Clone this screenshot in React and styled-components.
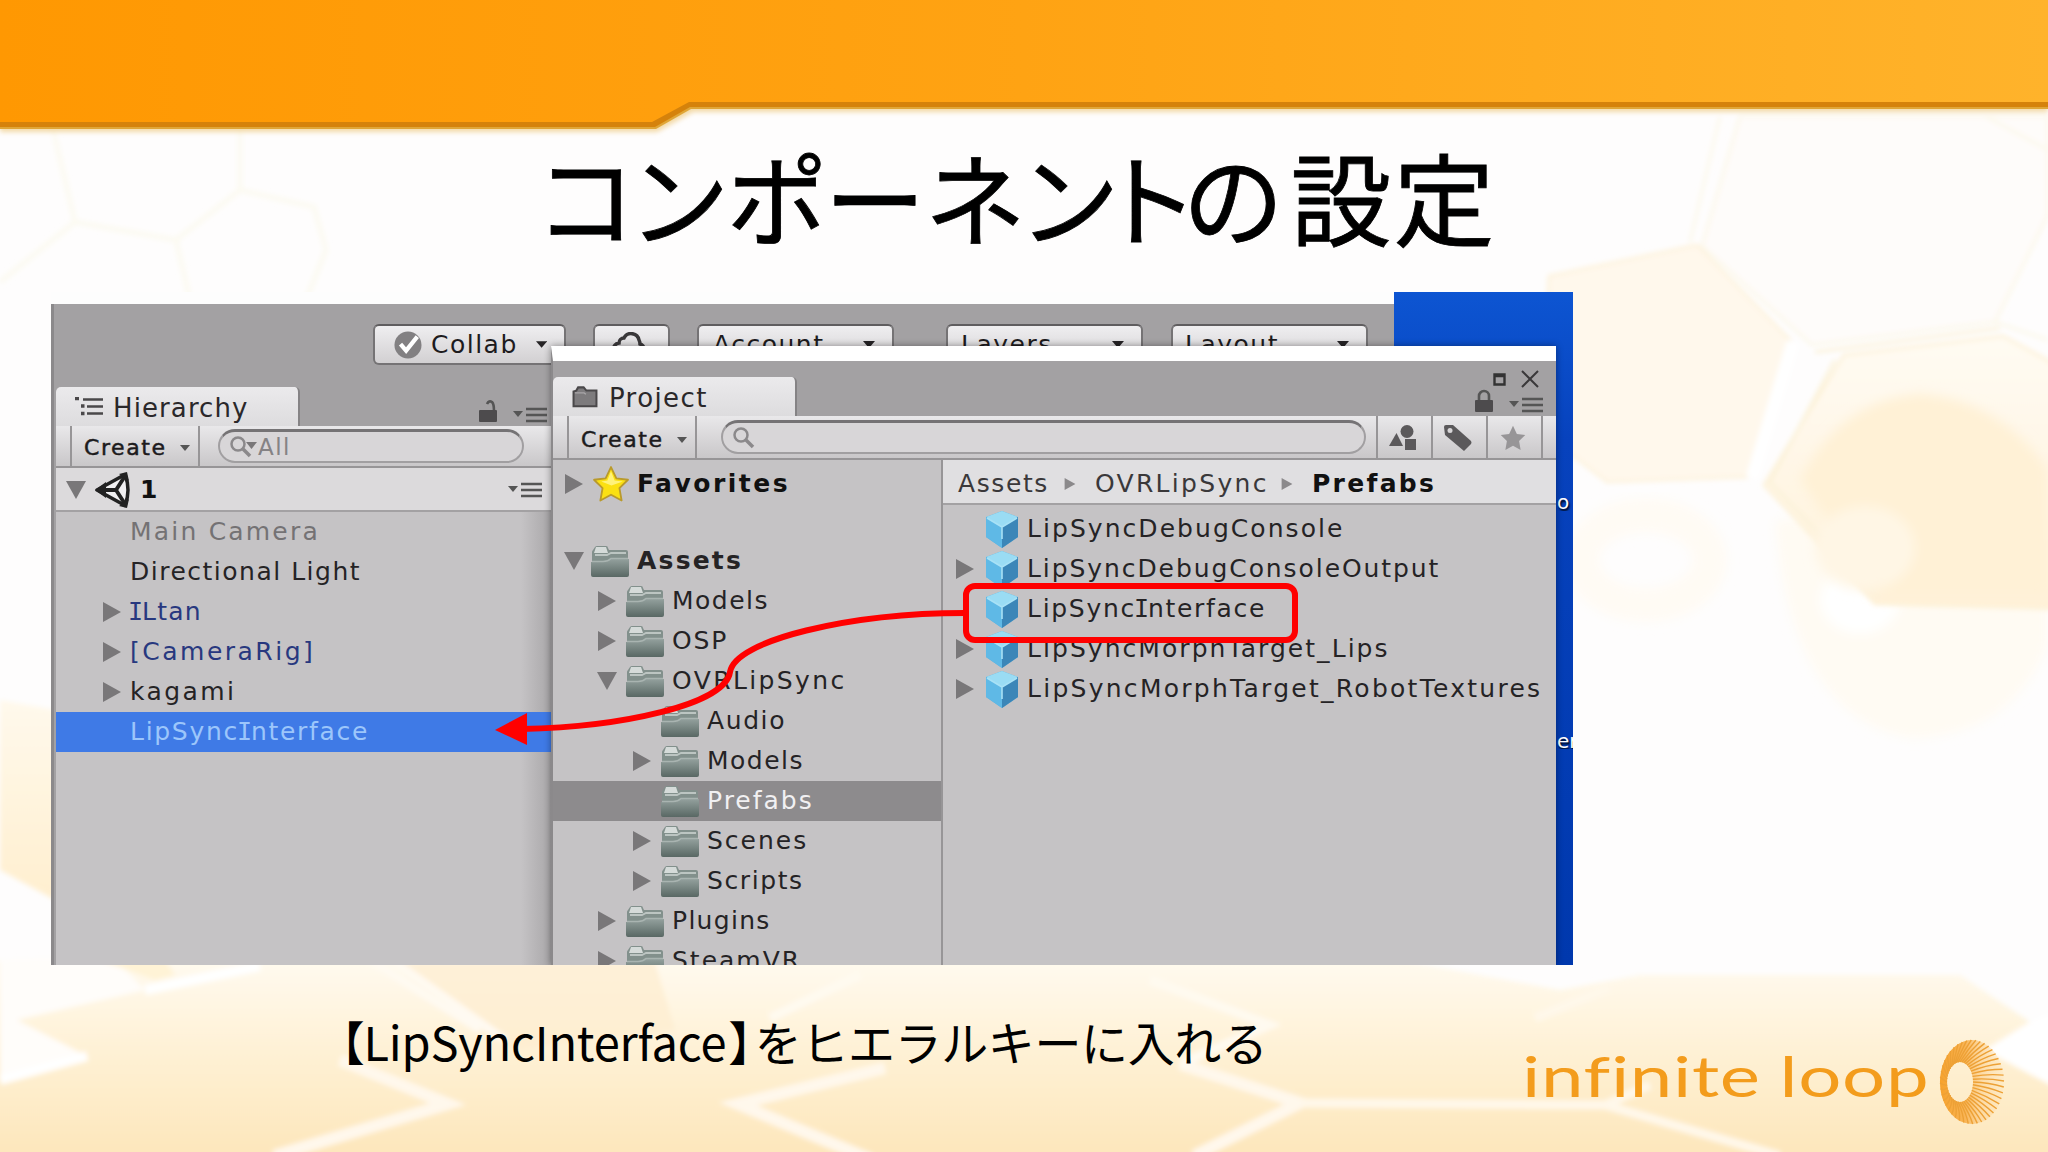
import React from "react";
import styled, { createGlobalStyle } from "styled-components";

const Global = createGlobalStyle`
  * { box-sizing: border-box; }
  body { margin: 0; background: #fff; overflow: hidden; }
`;

const ui = `"DejaVu Sans", Verdana, sans-serif`;
const jp = `"Noto Sans CJK JP", sans-serif`;

/* ---------- slide ---------- */
const Slide = styled.main`
  position: relative;
  width: 2048px;
  height: 1152px;
  overflow: hidden;
  display: flex;
  flex-direction: column;
  background: #fefdfd;
`;
const Backdrop = styled.svg`
  position: absolute;
  inset: 0;
`;
const Title = styled.h1`
  position: relative;
  margin: 124px 0 0;
  height: 168px;
  padding-left: 547px;
  display: flex;
  font: 400 101px/142px ${jp};
  font-feature-settings: "palt";
  -webkit-text-stroke: 0.8px #000;
  color: #000;
  white-space: nowrap;
`;
const Glyph = styled.span`
  width: ${(p) => p.$w}px;
  display: flex;
  justify-content: center;
`;
const Frame = styled.section`
  position: relative;
  flex: none;
  margin-left: 51px;
  width: 1522px;
  height: 673px;
  overflow: hidden;
  display: flex;
  background: #fdfdfd;
`;
const Footer = styled.footer`
  position: relative;
  flex: 1;
  display: flex;
  padding-left: 340px;
`;
const Caption = styled.p`
  margin: 42px 0 0;
  width: 1182px;
  display: flex;
  font: 400 47px/68px ${jp};
  color: #000;
  white-space: nowrap;
`;
const CaptionPart = styled.span`
  letter-spacing: ${(p) => p.$track || 0}px;
  margin-left: ${(p) => p.$shift || 0}px;
  font-feature-settings: ${(p) => (p.$tight ? `"palt"` : "normal")};
`;
const Brand = styled.div`
  display: flex;
  align-items: flex-start;
  width: 500px;
`;
const BrandName = styled.div`
  flex: none;
  width: 416px;
  margin-top: 77px;
  font: 400 56px/68px Lato, sans-serif;
  color: #f39c1c;
  white-space: nowrap;
  transform: scaleX(1.36);
  transform-origin: 0 0;
  letter-spacing: 0.5px;
  word-spacing: -1px;
`;
const Ring = styled.svg`
  flex: none;
  margin-top: 73px;
`;

/* ---------- editor main window ---------- */
const Editor = styled.div`
  width: 1343px;
  height: 661px;
  margin-top: 12px;
  background: #a3a1a3;
  border-left: 3px solid #8b898b;
  display: flex;
  flex-direction: column;
`;
const TopBar = styled.div`
  height: 83px;
  padding: 20px 0 0 319px;
  display: flex;
  align-items: flex-start;
`;
const TopButton = styled.div`
  width: ${(p) => p.$w}px;
  margin-right: ${(p) => p.$gap}px;
  height: 41px;
  padding: 0 17px 0 ${(p) => p.$pad || 14}px;
  border: 2px solid #757375;
  border-top-color: #5f5d5f;
  border-radius: 6px;
  background: linear-gradient(#efeef0, #d2d0d2);
  display: flex;
  align-items: center;
  gap: 9px;
  font: 25px/36px ${ui};
  letter-spacing: 1.5px;
  color: #1d1b1d;
`;
const Push = styled.span`
  flex: 1;
`;
const Panel = styled.div`
  width: 497px;
  margin-left: 2px;
  flex: 1;
  display: flex;
  flex-direction: column;
  background: linear-gradient(90deg, #c5c3c5 0, #c5c3c5 465px, #a7a5a7 497px);
`;
const TabStrip = styled.div`
  height: ${(p) => p.$h}px;
  display: flex;
  align-items: flex-end;
  background: #a3a1a3;
`;
const Tab = styled.div`
  height: 39px;
  width: 244px;
  padding: 4px 0 0 ${(p) => p.$pad}px;
  display: flex;
  align-items: center;
  gap: ${(p) => p.$gap}px;
  background: linear-gradient(#ebeaec, #dddcde);
  border-right: 2px solid #858385;
  border-radius: 5px 5px 0 0;
  font: 26px/35px ${ui};
  letter-spacing: ${(p) => p.$track}px;
  color: #2a282a;

  svg { margin-bottom: 4px; }
`;
const StripTools = styled.div`
  flex: 1;
  display: flex;
  justify-content: flex-end;
  align-items: flex-end;
  gap: 16px;
  padding: 0 ${(p) => p.$right}px 3px 0;
`;
const Toolbar = styled.div`
  height: ${(p) => p.$h}px;
  flex: none;
  padding-left: 14px;
  display: flex;
  align-items: center;
  background: linear-gradient(#e9e8ea, #c9c7c9);
  border-bottom: 2px solid #979597;
`;
const CreateButton = styled.div`
  align-self: stretch;
  width: 130px;
  padding: ${(p) => p.$drop}px 8px 0 12px;
  display: flex;
  align-items: center;
  justify-content: space-between;
  border: solid #979597;
  border-width: 0 2px;
  font: 22px/36px ${ui};
  letter-spacing: 1.6px;
  color: #1d1b1d;
  -webkit-text-stroke: 0.5px #1d1b1d;
`;
const Search = styled.div`
  width: ${(p) => p.$w}px;
  height: 34px;
  margin-left: ${(p) => p.$left}px;
  padding-left: 10px;
  display: flex;
  align-items: center;
  gap: 1px;
  border: 2px solid #a19fa1;
  border-top: 3px solid #757375;
  border-radius: 17px;
  background: #d8d6d8;
  font: 23px/26px ${ui};
  letter-spacing: 1.5px;
  color: #858385;
`;
const SceneRow = styled.div`
  height: 44px;
  display: flex;
  align-items: center;
  padding: 2px 11px 0 10px;
  gap: 9px;
  background: #dcdadc;
  border-bottom: 2px solid #a3a1a3;
  font: 700 25px/40px ${ui};
  color: #111;
`;
const Row = styled.div`
  flex: none;
  height: 40px;
  padding-left: ${(p) => p.$pad}px;
  display: flex;
  align-items: center;
  background: ${(p) => p.$fill || "transparent"};
  color: ${(p) => p.$ink || "#252325"};
  font: ${(p) => (p.$bold ? 700 : 400)} 25px/40px ${ui};
  letter-spacing: ${(p) => p.$track || 1.4}px;
  white-space: nowrap;
`;
const ArrowSlot = styled.span`
  width: ${(p) => p.$w}px;
  display: flex;
  align-items: center;
`;
const IconSlot = styled.span`
  width: ${(p) => p.$w}px;
  display: flex;
  align-items: center;
`;
const SerifI = styled.span`
  font-family: "DejaVu Sans Mono", monospace;
  letter-spacing: 0;
  margin: 0 -1px 0 -2px;
`;
const HierarchyList = styled.div`
  display: flex;
  flex-direction: column;
`;

/* ---------- floating project window ---------- */
const ProjectWindow = styled.div`
  position: absolute;
  left: 500px;
  top: 54px;
  width: 1005px;
  height: 619px;
  display: flex;
  flex-direction: column;
  background: #c5c3c5;
  border-top: 15px solid #fff;
  border-left: 2px solid #8b898b;
  box-shadow: 0 0 7px rgba(0, 0, 0, 0.4);
  overflow: hidden;
`;
const WindowTools = styled.div`
  flex: 1;
  align-self: stretch;
  display: flex;
  flex-direction: column;
  align-items: flex-end;
  justify-content: flex-end;
  gap: 1px;
  padding: 0 13px 3px 0;
`;
const ToolLine = styled.div`
  display: flex;
  align-items: ${(p) => (p.$low ? "flex-end" : "center")};
  gap: ${(p) => p.$gap}px;
  padding-right: ${(p) => p.$right || 0}px;
`;
const Filters = styled.div`
  margin-left: 10px;
  align-self: stretch;
  display: flex;
  border-left: 2px solid #979597;
`;
const FilterButton = styled.div`
  width: 55px;
  padding: 2px 3px 0 0;
  border-right: 2px solid #979597;
  display: flex;
  align-items: center;
  justify-content: center;
`;
const Columns = styled.div`
  flex: 1;
  display: flex;
  min-height: 0;
`;
const Tree = styled.div`
  width: 390px;
  border-right: 2px solid #979597;
  display: flex;
  flex-direction: column;
  overflow: hidden;
`;
const TreeTop = styled.div`
  flex: none;
  height: 81px;
  padding-top: 4px;
`;
const Assets = styled.div`
  flex: 1;
  display: flex;
  flex-direction: column;
`;
const Breadcrumb = styled.div`
  height: 45px;
  padding: 5px 0 0 15px;
  margin-bottom: 4px;
  display: flex;
  align-items: center;
  background: #e0dfe1;
  border-bottom: 2px solid #a3a1a3;
  font: 25px/38px ${ui};
`;
const Crumb = styled.span`
  width: ${(p) => p.$w}px;
  letter-spacing: ${(p) => p.$track}px;
  font-weight: ${(p) => (p.$bold ? 700 : 400)};
  color: ${(p) => (p.$bold ? "#111" : "#3a383a")};
`;
const CrumbArrow = styled.span`
  width: ${(p) => p.$w}px;
  display: flex;
`;

/* ---------- desktop ---------- */
const Desktop = styled.div`
  flex: 1;
  background: linear-gradient(#0d55d2, #0742bd 22%, #0038ad);
  display: flex;
  flex-direction: column;
  align-items: flex-end;
  color: #fff;
  font: 20px/28px ${ui};
  padding-top: 196px;
`;
const DesktopLabel = styled.span`
  width: 16px;
  height: 28px;
  margin-bottom: 216px;
  overflow: hidden;
  text-shadow: 1px 2px 2px #000;
`;

/* ---------- annotations ---------- */
const RedBox = styled.div`
  position: absolute;
  left: 912px;
  top: 291px;
  width: 335px;
  height: 60px;
  border: 6px solid #f00;
  border-radius: 12px;
`;
const Arrow = styled.svg`
  position: absolute;
  left: 0;
  top: 0;
`;

/* ---------- icons ---------- */
const Tri = ({ down, s = 20, c = "#797779" }) => (
  <svg width={s} height={s} viewBox="0 0 20 20">
    <path d={down ? "M0 1H20L10 19Z" : "M1 0V20L19 10Z"} fill={c} />
  </svg>
);
const Caret = ({ w = 12, c = "#252325" }) => (
  <svg width={w} height={w * 0.6} viewBox="0 0 12 7">
    <path d="M0 0H12L6 7Z" fill={c} />
  </svg>
);
const MenuIcon = () => (
  <svg width="34" height="16" viewBox="0 0 34 16">
    <path d="M0 4H10L5 10Z" fill="#555" />
    <path d="M13 2H34M13 8H34M13 14H34" stroke="#555" strokeWidth="2.6" />
  </svg>
);
const Check = () => (
  <svg width="30" height="30" viewBox="0 0 30 30">
    <circle cx="15" cy="15" r="14.5" fill="#828082" />
    <path d="M7 14l6 7L25 6" fill="none" stroke="#fff" strokeWidth="4.5" />
  </svg>
);
const Cloud = () => (
  <svg width="36" height="26" viewBox="0 0 36 26">
    <path d="M8 23a6 6 0 0 1-1-12 5 5 0 0 1 5-5 8 8 0 0 1 15 2c1 2 1 3 1 4a6 6 0 0 1 1 11z" fill="none" stroke="#3a383a" strokeWidth="3.5" />
  </svg>
);
const TreeIcon = () => (
  <svg width="28" height="20" viewBox="0 0 28 20">
    <path d="M8 2.500H28M12 9.500H28M12 16.500H28" stroke="#4a484a" strokeWidth="2.4" />
    <path d="M0 1.500h4M6 9h3.500M6 16.500h3.500" stroke="#4a484a" strokeWidth="3.500" />
  </svg>
);
const LockIcon = ({ open }) => (
  <svg width="18" height="24" viewBox="0 0 18 24">
    <path d={open ? "M8 5q2-4 5-2q2 2 2 9" : "M4 12V7a5 5 0 0 1 10 0v5"} fill="none" stroke="#555" strokeWidth="2.600" />
    <rect x="0" y="11" width="18" height="12" rx="1" fill="#4d4b4d" />
  </svg>
);
const SearchIcon = ({ menu }) => (
  <svg width={menu ? 27 : 24} height="24" viewBox={menu ? "0 0 27 24" : "0 0 24 24"}>
    <circle cx="8" cy="9" r="6.500" fill="none" stroke="#8b898b" strokeWidth="2.500" />
    <path d="M13 14l7 7" stroke="#8b898b" strokeWidth="3.500" />
    {menu && <path d="M16 7h11l-5.500 7z" fill="#797779" />}
  </svg>
);
const UnityIcon = () => (
  <svg width="36" height="36" viewBox="0 0 36 36">
    <path d="M2 18L30 2.500Q36 18 30 33.500Z" fill="#f1f0f2" stroke="#222" strokeWidth="3.500" strokeLinejoin="round" />
    <path d="M0 18L11 10V26Z" fill="#222" />
    <path d="M4 18H21L30 4M21 18l9 14" fill="none" stroke="#222" strokeWidth="3.800" />
    <path d="M24 2l8-2 2 9zM24 34l8 2 2-9z" fill="#222" />
  </svg>
);
const Folder = () => (
  <svg width="38" height="33" viewBox="0 0 38 33">
    <defs>
      <linearGradient id="fld" x1="0" y1="0" x2="0" y2="1">
        <stop offset="0" stopColor="#93a09d" />
        <stop offset="1" stopColor="#596864" />
      </linearGradient>
    </defs>
    <path d="M1 30V7q0-1 1-2l2-3q1-1 2-1h9q2 0 2 2l1 2h17q2 0 2 2v23z" fill="#82908c" />
    <path d="M5 2h10l2 6H3z" fill="#d5dbd9" />
    <path d="M4 10l12 0 4-2h15" stroke="#bcc5c2" strokeWidth="1.800" fill="none" />
    <path d="M0 17h12q5 0 8-3h18v16q0 2-2 2H2q-2 0-2-2z" fill="url(#fld)" />
    <path d="M1 16.500h11q5 0 8-3h17" stroke="#a9b4b1" strokeWidth="1.600" fill="none" />
  </svg>
);
const TabFolder = () => (
  <svg width="28" height="22" viewBox="0 0 28 24">
    <path d="M1.500 22V6l3-1 2-3.500h6l3 3.500h11V22z" fill="#7d7b7d" stroke="#4a484a" strokeWidth="2.200" />
    <path d="M3 7.500h10l2 1.500" stroke="#a9a7a9" strokeWidth="1.500" fill="none" />
  </svg>
);
const Cube = () => (
  <svg width="34" height="37" viewBox="0 0 34 37">
    <path d="M17 0L33 6V26L17 37L1 26V6Z" fill="#58aedd" />
    <path d="M17 0L33 6L17 16L1 6Z" fill="#9adcf4" />
    <path d="M1 6L17 16V37L1 26Z" fill="#5fb9e6" />
    <path d="M33 6L17 16V37L33 26Z" fill="#3b86b8" />
    <path d="M2 7L17 16L32 7M17 16V28" fill="none" stroke="#a9e2f6" strokeWidth="1.600" />
  </svg>
);
const starPath = "M17 1L22.200 12L33.500 13.400L25.200 21.500L27.300 33.500L17 28L6.700 33.500L8.800 21.500L.500 13.400L11.800 12Z";
const Star = () => (
  <svg width="36" height="36" viewBox="0 0 34 35">
    <path d={starPath} fill="#fbe012" stroke="#b99a2c" strokeWidth="1.800" strokeLinejoin="round" />
    <path d="M17 5l3.500 9 8 1-11 4-10-4 6-1z" fill="#fff27a" />
  </svg>
);
const GreyStar = () => (
  <svg width="26" height="26" viewBox="0 0 34 35">
    <path d={starPath} fill="#979597" />
  </svg>
);
const Shapes = () => (
  <svg width="28" height="26" viewBox="0 0 28 26">
    <circle cx="18" cy="6.500" r="6.500" fill="#5b595b" />
    <path d="M0 21L7.500 8L14 21Z" fill="#5b595b" />
    <rect x="16" y="14" width="11" height="11" fill="#5b595b" />
  </svg>
);
const Tag = () => (
  <svg width="30" height="28" viewBox="0 0 30 28">
    <path d="M1 3Q1 1 3 1H10L28 17Q29 19 28 20L21 27L2 11Z" fill="#5b595b" />
    <circle cx="7" cy="6.500" r="2.500" fill="#d8d6d8" />
  </svg>
);

const label = (t) =>
  t.split(/(I)/).map((s, i) => (s === "I" ? <SerifI key={i}>I</SerifI> : s));

/* ---------- data ---------- */
const hierarchy = [
  { t: "Main Camera", ink: "#747274", k: 2.2 },
  { t: "Directional Light", k: 1.5 },
  { t: "ILtan", ink: "#28387f", arrow: true, k: 1.2 },
  { t: "[CameraRig]", ink: "#28387f", arrow: true, k: 2.5 },
  { t: "kagami", arrow: true, k: 2.4 },
  { t: "LipSyncInterface", ink: "#9cc6fb", fill: "#3f7ae6", k: 1.7 },
];
const tree = [
  { t: "Assets", lv: 0, a: "down", bold: true, k: 2.2 },
  { t: "Models", lv: 1, a: "right", k: 1.5 },
  { t: "OSP", lv: 1, a: "right", k: 1.8 },
  { t: "OVRLipSync", lv: 1, a: "down", k: 2.4 },
  { t: "Audio", lv: 2, k: 1.6 },
  { t: "Models", lv: 2, a: "right", k: 1.5 },
  { t: "Prefabs", lv: 2, fill: "#8d8b8d", ink: "#f1f0f2", k: 2 },
  { t: "Scenes", lv: 2, a: "right", k: 2 },
  { t: "Scripts", lv: 2, a: "right", k: 1.6 },
  { t: "Plugins", lv: 1, a: "right", k: 1.3 },
  { t: "SteamVR", lv: 1, a: "right", k: 2 },
];
const prefabs = [
  { t: "LipSyncDebugConsole", k: 2.05 },
  { t: "LipSyncDebugConsoleOutput", a: true, k: 1.92 },
  { t: "LipSyncInterface", k: 1.7 },
  { t: "LipSyncMorphTarget_Lips", a: true, k: 2.05 },
  { t: "LipSyncMorphTarget_RobotTextures", a: true, k: 2.27 },
];
const title = [
  ["コ", 82], ["ン", 100], ["ポ", 92], ["ー", 108], ["ネ", 92],
  ["ン", 96], ["ト", 70], ["の", 92], ["設", 124], ["定", 82],
];

function Background() {
  return (
    <Backdrop width="2048" height="1152" viewBox="0 0 2048 1152">
      <defs>
        <linearGradient id="ban" x1="0" x2="1" y1="0" y2="0">
          <stop offset="0" stopColor="#ff9802" />
          <stop offset=".5" stopColor="#ffa313" />
          <stop offset="1" stopColor="#ffb32b" />
        </linearGradient>
        <linearGradient id="floor" x1="0" x2="0" y1="0" y2="1">
          <stop offset="0" stopColor="#fffaef" />
          <stop offset=".5" stopColor="#fef0d2" />
          <stop offset="1" stopColor="#fde5b9" />
        </linearGradient>
        <linearGradient id="hexB" x1="0" x2="0" y1="0" y2="1">
          <stop offset="0" stopColor="#fffbf3" />
          <stop offset="1" stopColor="#fff1d8" />
        </linearGradient>
        <linearGradient id="side" x1="0" x2="0" y1="0" y2="1">
          <stop offset="0" stopColor="#fff9ec" />
          <stop offset="1" stopColor="#ffefcf" />
        </linearGradient>
        <filter id="soft"><feGaussianBlur stdDeviation="2.500" /></filter>
        <filter id="haze"><feGaussianBlur stdDeviation="6" /></filter>
      </defs>

      <g fill="none" stroke="#fcfaf1" strokeWidth="5" filter="url(#soft)">
        <path d="M52 125L75 222L176 240L240 190V125M75 222L0 282M176 240L190 300M240 190L314 207L326 250L306 300" />
      </g>

      <g filter="url(#soft)">
        <path d="M1740 116L1702 246L1812 345L1995 322L2048 215V116Z" fill="#fefcfa" stroke="#fcf8ea" strokeWidth="3" />
        <path d="M1720 116L1690 242M1995 322L2048 340M1985 116L2048 150" stroke="#fcf8ea" strokeWidth="3" />
        <path d="M1549 276L1697 245L1790 340L1747 477L1607 482L1540 430Z" fill="#fff8ec" stroke="#fdf3de" strokeWidth="3" />
        <path d="M1793 342L1752 478" stroke="#fff" strokeWidth="13" />
      </g>
      <g filter="url(#haze)">
        <ellipse cx="1646" cy="560" rx="64" ry="45" fill="none" stroke="#fffbf4" strokeWidth="34" />
        <path d="M1775 520Q1790 715 1908 738Q2010 738 2048 645V520Z" fill="#fffbf3" />
        <ellipse cx="1860" cy="600" rx="40" ry="34" fill="#fff" />
      </g>
      <g filter="url(#soft)">
        <path d="M1844 355L2003 336L2060 367V609L1875 604L1764 485Z" fill="url(#hexB)" stroke="#fdf2d9" strokeWidth="3" />
        <path d="M1815 352L2000 328M1835 360L1770 482L1880 597" stroke="#fbf2d9" strokeWidth="3" fill="none" />
      </g>
      <g filter="url(#haze)">
        <path d="M1800 480Q1840 400 1920 394Q2000 400 2048 470V596L1880 596Z" fill="#fff1d6" />
        <ellipse cx="1865" cy="548" rx="50" ry="42" fill="#fff6e5" />
      </g>

      <g filter="url(#soft)">
        <path d="M0 700L55 710V900L0 870Z" fill="url(#side)" />
        <path d="M-10 960H1400L1560 990L1640 975H1960L2030 1022L1985 1050L2060 1090V1165H-10Z" fill="url(#floor)" />
        <path d="M0 960L110 955L145 990L17 1020L87 1056L0 1080Z" fill="#fffdfa" />
        <path d="M100 960H165L175 975L155 980Z" fill="#fff3d6" />
        <path d="M400 962H655L675 1030L510 1050Z" fill="#fdedcf" opacity=".7" />
        <path d="M370 960L480 1030M395 962L505 1040" stroke="#fffaf2" strokeWidth="8" />
        <path d="M145 990L260 966M0 1080L87 1056" stroke="#fff" strokeWidth="10" fill="none" />
        <path d="M340 1060L448 1104L274 1156M885 1068L738 1104L872 1160M1180 1064L1300 1103L1194 1156" fill="none" stroke="#fff8ec" strokeWidth="12" />
        <path d="M770 1018L860 975M1150 980L1270 1025L1180 1064" fill="none" stroke="#fffaf0" strokeWidth="9" />
        <path d="M1300 1103L1605 1105L1780 1156M1535 1018L1610 988M1605 1105L1650 1085" fill="none" stroke="#fff8ea" strokeWidth="9" />
        <path d="M2030 1022L1985 1050L2060 1090V1010Z" fill="#fff" />
      </g>

      <path d="M0 0H2048V112H693L657 132H0Z" fill="#f3d9a6" filter="url(#soft)" />
      <path d="M0 0H2048V109H691L656 129H0Z" fill="#e0a637" />
      <path d="M0 0H2048V107H690L655 127H0Z" fill="#d5820b" />
      <path d="M0 0H2048V102H689L652 122H0Z" fill="url(#ban)" />
    </Backdrop>
  );
}

const spokes = Array.from({ length: 44 }, (_, i) => {
  const a = (i / 44) * Math.PI * 2;
  const at = (t, cx, rx, ry) => `${(cx + rx * Math.cos(t)).toFixed(1)} ${(44 + ry * Math.sin(t)).toFixed(1)}`;
  return `M${at(a, 22, 13, 20)}Q${at(a + 0.02, 29, 22, 32)} ${at(a + 0.12, 34, 32, 42)}`;
}).join("");

function LoopRing() {
  return (
    <Ring width="68" height="88" viewBox="0 0 68 88">
      <defs>
        <linearGradient id="ring" x1="0" x2="1" y1="0" y2="0">
          <stop offset="0" stopColor="#f7a22c" />
          <stop offset=".4" stopColor="#f9b557" />
          <stop offset=".65" stopColor="#fccf8c" stopOpacity=".6" />
          <stop offset="1" stopColor="#fde0b0" stopOpacity=".2" />
        </linearGradient>
      </defs>
      <path fillRule="evenodd" fill="url(#ring)" d="M34 2A32 42 0 1 1 33.900 2ZM22 24A13 20 0 1 0 22.100 24Z" />
      <path d={spokes} fill="none" stroke="#eda136" strokeWidth="1.400" />
    </Ring>
  );
}

function Hierarchy() {
  return (
    <Panel>
      <TabStrip $h={39}>
        <Tab $pad={19} $gap={10} $track={1.1}><TreeIcon />Hierarchy</Tab>
        <StripTools $right={6}><LockIcon open /><MenuIcon /></StripTools>
      </TabStrip>
      <Toolbar $h={42}>
        <CreateButton $drop={3}>Create<Caret w={10} c="#555" /></CreateButton>
        <Search $w={306} $left={18}><SearchIcon menu />All</Search>
      </Toolbar>
      <SceneRow>
        <Tri down /><UnityIcon />1<Push /><MenuIcon />
      </SceneRow>
      <HierarchyList>
        {hierarchy.map((r) => (
          <Row key={r.t} $pad={46} $fill={r.fill} $ink={r.ink} $track={r.k}>
            <ArrowSlot $w={28}>{r.arrow && <Tri />}</ArrowSlot>
            <span>{label(r.t)}</span>
          </Row>
        ))}
      </HierarchyList>
    </Panel>
  );
}

function Project() {
  return (
    <ProjectWindow>
      <TabStrip $h={55}>
        <Tab $pad={18} $gap={10} $track={1.4}><TabFolder />Project</Tab>
        <WindowTools>
          <ToolLine $gap={15} $right={4}>
            <svg width="13" height="13"><path d="M1.500 1.500h10v10h-10zM1 3h11" fill="none" stroke="#333" strokeWidth="2.400" /></svg>
            <svg width="18" height="18"><path d="M1 1l16 16M17 1L1 17" stroke="#3a383a" strokeWidth="2" /></svg>
          </ToolLine>
          <ToolLine $gap={16} $low><LockIcon /><MenuIcon /></ToolLine>
        </WindowTools>
      </TabStrip>
      <Toolbar $h={44}>
        <CreateButton $drop={5}>Create<Caret w={10} c="#555" /></CreateButton>
        <Search $w={645} $left={24}><SearchIcon /></Search>
        <Filters>
          <FilterButton><Shapes /></FilterButton>
          <FilterButton><Tag /></FilterButton>
          <FilterButton><GreyStar /></FilterButton>
        </Filters>
      </Toolbar>
      <Columns>
        <Tree>
          <TreeTop>
            <Row $pad={11} $bold $track={2.5} $ink="#111">
              <ArrowSlot $w={29}><Tri /></ArrowSlot>
              <IconSlot $w={44}><Star /></IconSlot>
              Favorites
            </Row>
          </TreeTop>
          {tree.map((r, i) => (
            <Row key={i} $pad={(r.lv ? 9 : 11) + r.lv * 35} $fill={r.fill} $ink={r.ink} $bold={r.bold} $track={r.k}>
              <ArrowSlot $w={r.lv ? 29 : 27}>{r.a && <Tri down={r.a === "down"} />}</ArrowSlot>
              <IconSlot $w={46}><Folder /></IconSlot>
              <span>{r.t}</span>
            </Row>
          ))}
        </Tree>
        <Assets>
          <Breadcrumb>
            <Crumb $w={106} $track={1.6}>Assets</Crumb>
            <CrumbArrow $w={31}><Tri s={12} c="#8b898b" /></CrumbArrow>
            <Crumb $w={186} $track={2.3}>OVRLipSync</Crumb>
            <CrumbArrow $w={31}><Tri s={12} c="#8b898b" /></CrumbArrow>
            <Crumb $w={130} $track={2.3} $bold>Prefabs</Crumb>
          </Breadcrumb>
          {prefabs.map((r) => (
            <Row key={r.t} $pad={12} $track={r.k}>
              <ArrowSlot $w={30}>{r.a && <Tri />}</ArrowSlot>
              <IconSlot $w={42}><Cube /></IconSlot>
              <span>{label(r.t)}</span>
            </Row>
          ))}
        </Assets>
      </Columns>
    </ProjectWindow>
  );
}

export default function App() {
  return (
    <>
      <Global />
      <Slide>
        <Background />
        <Title>
          {title.map(([c, w], i) => <Glyph key={i} $w={w}>{c}</Glyph>)}
        </Title>
        <Frame>
          <Editor>
            <TopBar>
              <TopButton $w={193} $gap={27} $pad={19}><Check />Collab<Push /><Caret /></TopButton>
              <TopButton $w={77} $gap={27} $pad={17}><Cloud /></TopButton>
              <TopButton $w={197} $gap={52}>Account<Push /><Caret /></TopButton>
              <TopButton $w={197} $gap={28} $pad={13}>Layers<Push /><Caret /></TopButton>
              <TopButton $w={197} $gap={0} $pad={12}>Layout<Push /><Caret /></TopButton>
            </TopBar>
            <Hierarchy />
          </Editor>
          <Desktop>
            <DesktopLabel>o</DesktopLabel>
            <DesktopLabel>er</DesktopLabel>
          </Desktop>
          <Project />
          <RedBox />
          <Arrow width="1522" height="673" viewBox="51 292 1522 673">
            <path d="M965 613C850 613 735 640 730 672C725 705 620 727 522 729" fill="none" stroke="#f00" strokeWidth="6" />
            <path d="M495 730L527 713V745Z" fill="#f00" />
          </Arrow>
        </Frame>
        <Footer>
          <Caption>
            <CaptionPart $tight>【</CaptionPart>
            <CaptionPart $track={-0.2}>LipSyncInterface</CaptionPart>
            <CaptionPart $tight $shift={3}>】</CaptionPart>
            <CaptionPart $shift={2} $track={-0.4}>をヒエラルキーに入れる</CaptionPart>
          </Caption>
          <Brand>
            <BrandName>infinite loop</BrandName>
            <LoopRing />
          </Brand>
        </Footer>
      </Slide>
    </>
  );
}
